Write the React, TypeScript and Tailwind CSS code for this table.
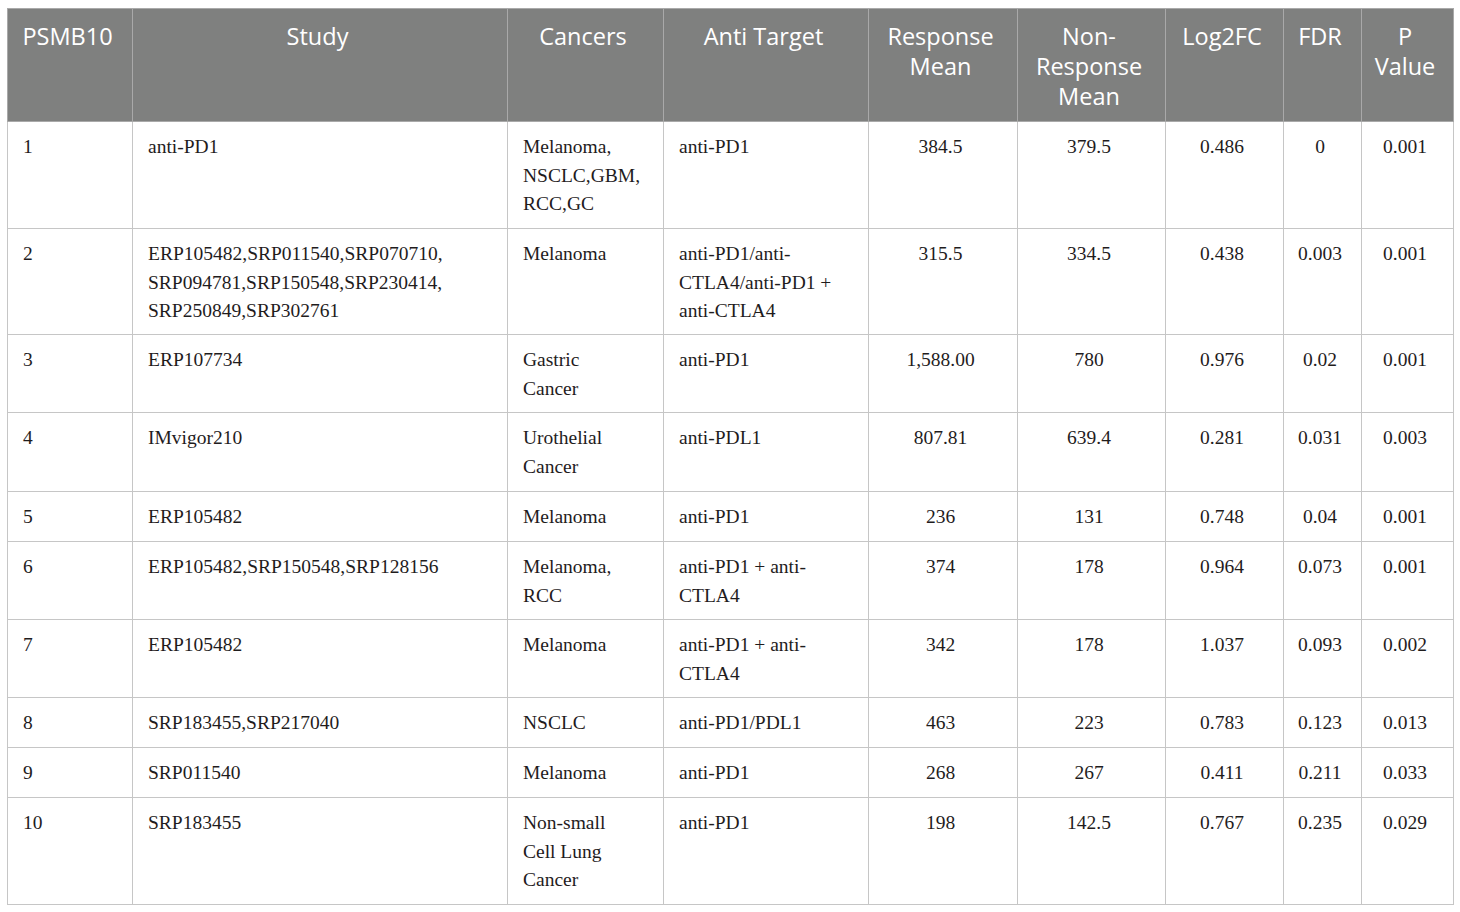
const headers: { lines: string[] }[] = [
  { lines: ['PSMB10'] },
  { lines: ['Study'] },
  { lines: ['Cancers'] },
  { lines: ['Anti Target'] },
  { lines: ['Response', 'Mean'] },
  { lines: ['Non-', 'Response', 'Mean'] },
  { lines: ['Log2FC'] },
  { lines: ['FDR'] },
  { lines: ['P', 'Value'] },
];

interface Row {
  height: string;
  id: string;
  study: string[];
  cancers: string[];
  target: string[];
  response: string;
  nonResponse: string;
  log2fc: string;
  fdr: string;
  p: string;
}

const rows: Row[] = [
  {
    height: 'h-[107px]',
    id: '1',
    study: ['anti-PD1'],
    cancers: ['Melanoma,', 'NSCLC,GBM,', 'RCC,GC'],
    target: ['anti-PD1'],
    response: '384.5',
    nonResponse: '379.5',
    log2fc: '0.486',
    fdr: '0',
    p: '0.001',
  },
  {
    height: 'h-[106px]',
    id: '2',
    study: ['ERP105482,SRP011540,SRP070710,', 'SRP094781,SRP150548,SRP230414,', 'SRP250849,SRP302761'],
    cancers: ['Melanoma'],
    target: ['anti-PD1/anti-', 'CTLA4/anti-PD1 +', 'anti-CTLA4'],
    response: '315.5',
    nonResponse: '334.5',
    log2fc: '0.438',
    fdr: '0.003',
    p: '0.001',
  },
  {
    height: 'h-[78px]',
    id: '3',
    study: ['ERP107734'],
    cancers: ['Gastric', 'Cancer'],
    target: ['anti-PD1'],
    response: '1,588.00',
    nonResponse: '780',
    log2fc: '0.976',
    fdr: '0.02',
    p: '0.001',
  },
  {
    height: 'h-[79px]',
    id: '4',
    study: ['IMvigor210'],
    cancers: ['Urothelial', 'Cancer'],
    target: ['anti-PDL1'],
    response: '807.81',
    nonResponse: '639.4',
    log2fc: '0.281',
    fdr: '0.031',
    p: '0.003',
  },
  {
    height: 'h-[50px]',
    id: '5',
    study: ['ERP105482'],
    cancers: ['Melanoma'],
    target: ['anti-PD1'],
    response: '236',
    nonResponse: '131',
    log2fc: '0.748',
    fdr: '0.04',
    p: '0.001',
  },
  {
    height: 'h-[78px]',
    id: '6',
    study: ['ERP105482,SRP150548,SRP128156'],
    cancers: ['Melanoma,', 'RCC'],
    target: ['anti-PD1 + anti-', 'CTLA4'],
    response: '374',
    nonResponse: '178',
    log2fc: '0.964',
    fdr: '0.073',
    p: '0.001',
  },
  {
    height: 'h-[78px]',
    id: '7',
    study: ['ERP105482'],
    cancers: ['Melanoma'],
    target: ['anti-PD1 + anti-', 'CTLA4'],
    response: '342',
    nonResponse: '178',
    log2fc: '1.037',
    fdr: '0.093',
    p: '0.002',
  },
  {
    height: 'h-[50px]',
    id: '8',
    study: ['SRP183455,SRP217040'],
    cancers: ['NSCLC'],
    target: ['anti-PD1/PDL1'],
    response: '463',
    nonResponse: '223',
    log2fc: '0.783',
    fdr: '0.123',
    p: '0.013',
  },
  {
    height: 'h-[50px]',
    id: '9',
    study: ['SRP011540'],
    cancers: ['Melanoma'],
    target: ['anti-PD1'],
    response: '268',
    nonResponse: '267',
    log2fc: '0.411',
    fdr: '0.211',
    p: '0.033',
  },
  {
    height: 'h-[107px]',
    id: '10',
    study: ['SRP183455'],
    cancers: ['Non-small', 'Cell Lung', 'Cancer'],
    target: ['anti-PD1'],
    response: '198',
    nonResponse: '142.5',
    log2fc: '0.767',
    fdr: '0.235',
    p: '0.029',
  },
];

function Lines({ lines }: { lines: string[] }) {
  return (
    <>
      {lines.map((l, i) => (
        <div key={i} className="whitespace-nowrap">
          {l}
        </div>
      ))}
    </>
  );
}

const leftCell = 'border border-[#c6c6c6] align-top pl-[15px] pr-2 pt-[11px] text-left';
// centred columns sit a touch left of true centre in the source
const midCell = 'border border-[#c6c6c6] align-top pl-[1px] pr-[6px] pt-[11px] text-center';

export default function App() {
  return (
    <div className="min-h-[912px] w-[1460px] bg-white pl-[7px] pt-[8px]">
      <table className="w-[1446px] table-fixed border-collapse border border-[#c6c6c6]">
        <colgroup>
          <col className="w-[125px]" />
          <col className="w-[375px]" />
          <col className="w-[156px]" />
          <col className="w-[205px]" />
          <col className="w-[149px]" />
          <col className="w-[148px]" />
          <col className="w-[118px]" />
          <col className="w-[78px]" />
          <col className="w-[92px]" />
        </colgroup>
        <thead>
          <tr className="h-[113px] bg-[#7f807f]">
            {headers.map((h, i) => (
              <th
                key={i}
                className="border border-[#a9a9a9] pl-[1px] pr-[6px] pt-[12px] align-top text-center text-[23.5px] font-normal leading-[30px] text-white"
                style={{ fontFamily: '"Open Sans", "Noto Sans", sans-serif' }}
              >
                <Lines lines={h.lines} />
              </th>
            ))}
          </tr>
        </thead>
        <tbody
          className="text-[19.5px] leading-[28.5px] text-[#1f1c1d]"
          style={{ fontFamily: '"Liberation Serif", "Times New Roman", serif' }}
        >
          {rows.map((r) => (
            <tr key={r.id} className={r.height}>
              <td className={leftCell}>{r.id}</td>
              <td className={leftCell}>
                <Lines lines={r.study} />
              </td>
              <td className={leftCell}>
                <Lines lines={r.cancers} />
              </td>
              <td className={leftCell}>
                <Lines lines={r.target} />
              </td>
              <td className={midCell}>{r.response}</td>
              <td className={midCell}>{r.nonResponse}</td>
              <td className={midCell}>{r.log2fc}</td>
              <td className={midCell}>{r.fdr}</td>
              <td className={midCell}>{r.p}</td>
            </tr>
          ))}
        </tbody>
      </table>
    </div>
  );
}
